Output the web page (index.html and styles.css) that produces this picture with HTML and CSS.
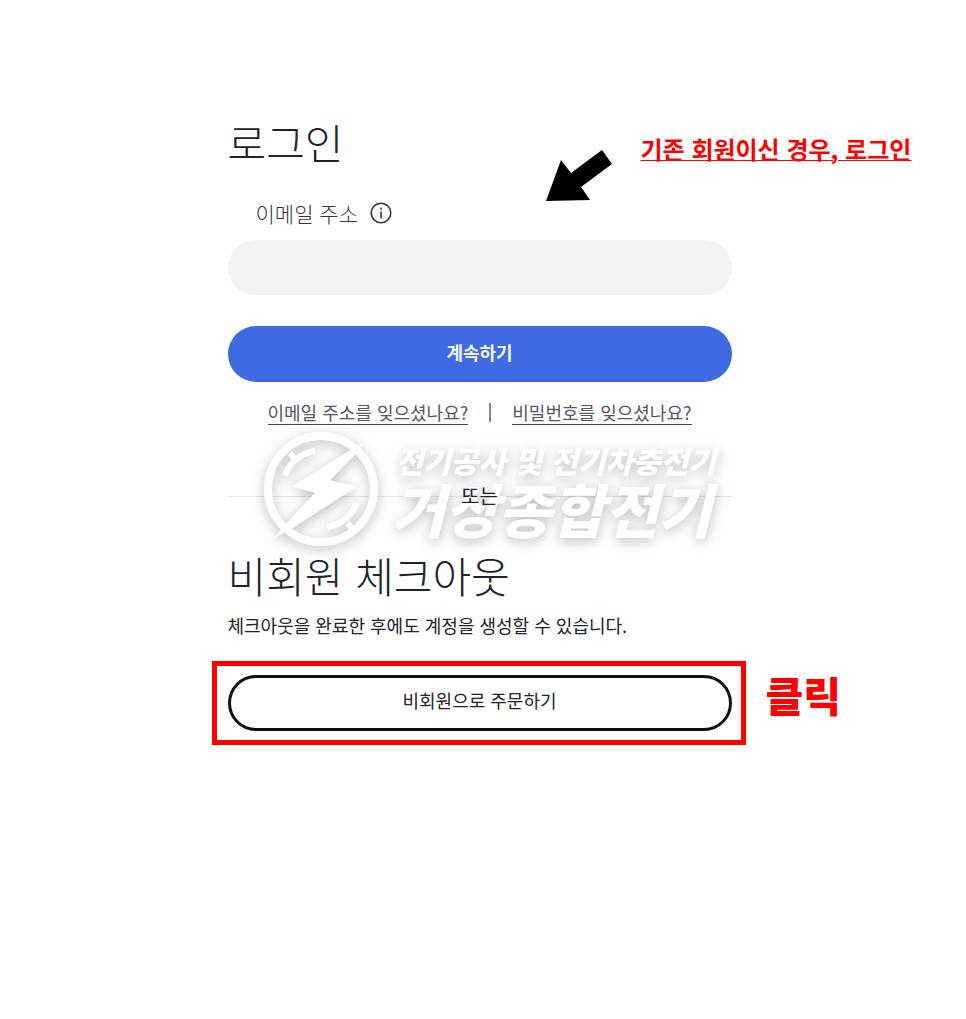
FILE: index.html
```html
<!DOCTYPE html>
<html lang="ko">
<head>
    <meta charset="UTF-8">
    <meta name="viewport" content="width=device-width, initial-scale=1.0">
    <title>로그인</title>
    <link rel="stylesheet" href="styles.css">
</head>
<body>
    <main class="container">
        <section class="login">
            <h1>로그인</h1>

            <!-- 안내 화살표와 문구 -->
            <svg class="arrow" viewBox="0 0 66 51" aria-hidden="true">
                <path d="M0 51 L15 10 L25 23 L56 0 L66 14 L35 37 L44 50 Z"/>
            </svg>
            <p class="note note-login">기존 회원이신 경우, 로그인</p>

            <form>
                <div class="label-row">
                    <label for="email">이메일 주소</label>
                    <button type="button" class="info" aria-label="도움말">
                        <svg viewBox="0 0 22 22">
                            <circle cx="11" cy="11" r="9.8"/>
                            <path d="M11 9.5V16.5M11 5.5V7.7"/>
                        </svg>
                    </button>
                </div>
                <input type="email" id="email">
                <button type="submit" class="btn btn-primary">계속하기</button>
            </form>

            <div class="links">
                <a href="#">이메일 주소를 잊으셨나요?</a>
                <span class="bar"></span>
                <a href="#">비밀번호를 잊으셨나요?</a>
            </div>
        </section>

        <div class="divider">
            <!-- 워터마크 -->
            <div class="watermark">
                <svg class="logo" viewBox="0 0 342 342">
                    <circle cx="171" cy="171" r="159" class="ring"/>
                    <path class="arc" d="M153 56 A116 116 0 0 0 63 130M78 64 L96 84M278 213 A116 116 0 0 1 190 286M251 273 L268 295"/>
                    <path class="bolt" d="M298 32 L275 66 L198 145 L278 164 L80 292 L28 320 L52 290 L153 182 L83 164 L258 55 Z"/>
                </svg>
                <div class="watermark-text">
                    <span class="watermark-small">전기공사 및 전기차충전기</span>
                    <span class="watermark-big">거상종합전기</span>
                </div>
            </div>
            <span class="or">또는</span>
        </div>

        <section class="guest">
            <h2>비회원 체크아웃</h2>
            <p>체크아웃을 완료한 후에도 계정을 생성할 수 있습니다.</p>
            <div class="highlight">
                <button type="button" class="btn btn-outline">비회원으로 주문하기</button>
                <strong class="note note-click">클릭</strong>
            </div>
        </section>
    </main>
</body>
</html>
```
FILE: styles.css
```css
* {
    margin: 0;
    padding: 0;
    box-sizing: border-box;
}

body {
    font-family: "Noto Sans CJK KR", sans-serif;
    font-size: 18px;
    line-height: 28px;
    background-color: #fefefe;
    color: #20222c;
    padding: 112px 24px 112px 17px;
    overflow-x: hidden;
}

button, input {
    font: inherit;
    border: none;
}

.container {
    width: 100%;
    max-width: 504px;
    margin: 0 auto;
}

.login {
    position: relative;
}

h1, h2 {
    font-size: 42px;
    font-weight: 300;
    line-height: 60px;
}

/* 이메일 입력 */
.label-row {
    display: flex;
    align-items: center;
    gap: 12px;
    padding-left: 28px;
    margin: 28px 0 14px;
}

label {
    font-size: 21px;
    font-weight: 300;
    line-height: 26px;
    color: #33353f;
}

.info {
    width: 22px;
    height: 22px;
    background: none;
    cursor: pointer;
}

.info svg {
    display: block;
    fill: none;
    stroke: #3c3e46;
    stroke-width: 1.6;
}

#email {
    display: block;
    width: 100%;
    height: 55px;
    padding: 0 28px;
    border-radius: 28px;
    background-color: #f3f3f3;
}

/* 버튼 */
.btn {
    display: block;
    width: 100%;
    height: 56px;
    padding-bottom: 4px;
    border-radius: 28px;
    cursor: pointer;
}

.btn-primary {
    margin-top: 31px;
    background-color: #3f6ae1;
    color: #f2f5ff;
    font-weight: 700;
}

.btn-outline {
    padding-bottom: 6px;
    background-color: #fff;
    border: 3px solid #0c0d16;
    color: #20222c;
}

.links {
    display: flex;
    justify-content: center;
    align-items: center;
    gap: 21px;
    margin-top: 18px;
    line-height: 24px;
}

.links a {
    color: #555761;
    text-decoration: none;
    border-bottom: 1px solid #484a54;
}

.bar {
    width: 2px;
    height: 19px;
    background-color: #85868c;
}

/* 또는 */
.divider {
    position: relative;
    margin: 57px 0 35px;
    text-align: center;
}

.divider::before {
    content: "";
    position: absolute;
    top: 14px;
    left: 0;
    right: 0;
    border-top: 1px solid #e9e9e9;
}

.or {
    position: relative;
    font-size: 20px;
    line-height: 26px;
}

.watermark {
    position: absolute;
    top: -50px;
    left: 36px;
    display: flex;
    gap: 14px;
    color: #fff;
    white-space: nowrap;
    filter: drop-shadow(0 4px 6px rgba(0, 0, 0, 0.2)) drop-shadow(0 0 8px rgba(0, 0, 0, 0.06));
}

.logo {
    width: 114px;
    height: 114px;
    overflow: visible;
    fill: #fff;
}

.ring, .arc {
    fill: none;
    stroke: #fff;
    stroke-width: 24;
}

.arc {
    stroke-width: 18;
}

.watermark-text {
    display: flex;
    flex-direction: column;
    padding-top: 10px;
    text-align: left;
    font-style: italic;
    font-weight: 900;
}

.watermark-small {
    padding-left: 4px;
    font-size: 30px;
    line-height: 36px;
}

.watermark-big {
    font-size: 58px;
    line-height: 60px;
}

/* 비회원 주문 */
.guest p {
    margin: 6px 0 22px;
}

.highlight {
    position: relative;
    margin: 0 -14px 0 -16px;
    padding: 9px 9px 9px 11px;
    border: 5px solid #f00;
}

/* 화면 위에 겹치는 안내 */
.arrow {
    position: absolute;
    top: 38px;
    left: 318px;
    width: 66px;
    height: 51px;
}

.note {
    position: absolute;
    color: #f00;
    white-space: nowrap;
}

.note-login {
    top: 23px;
    left: 413px;
    font-size: 24px;
    font-weight: 700;
    text-decoration: underline;
    text-decoration-thickness: 1px;
    text-underline-offset: 1px;
}

.note-click {
    top: 0;
    left: 100%;
    margin-left: 25px;
    font-size: 41px;
    font-weight: 900;
    line-height: 56px;
}
```
